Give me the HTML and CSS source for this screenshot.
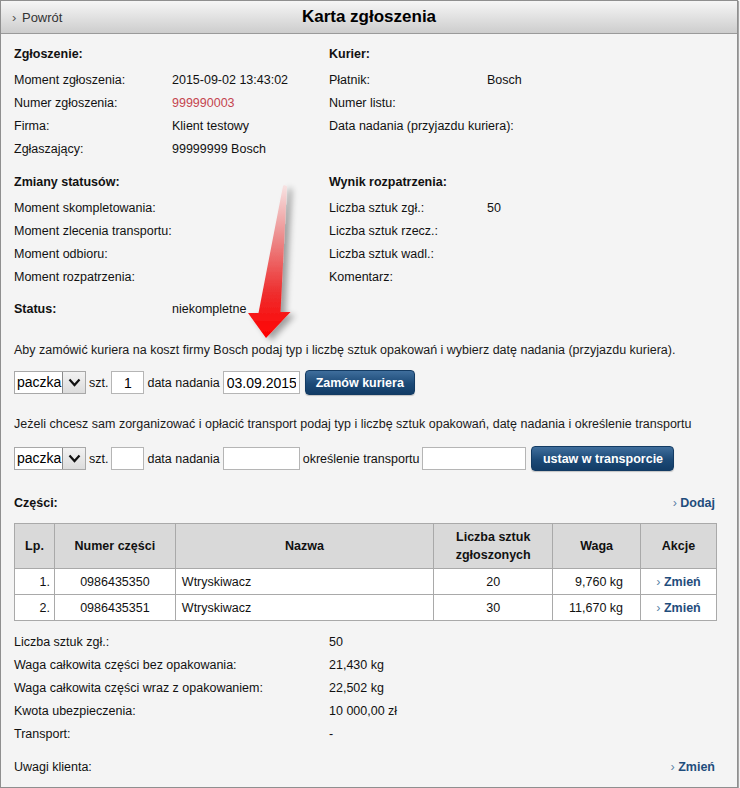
FILE: index.html
```html
<!DOCTYPE html>
<html lang="pl">
<head>
<meta charset="utf-8">
<title>Karta zgłoszenia</title>
<link rel="stylesheet" href="styles.css">
</head>
<body>
<div class="frame">
  <div class="header">
    <a class="back"><span class="chev">›</span> Powrót</a>
    <h1 class="title">Karta zgłoszenia</h1>
    <span></span>
  </div>

  <div class="content">
    <div class="info">
      <div class="block">
        <h3>Zgłoszenie:</h3>
        <div class="kv"><span>Moment zgłoszenia:</span><span>2015-09-02 13:43:02</span></div>
        <div class="kv"><span>Numer zgłoszenia:</span><span class="red">999990003</span></div>
        <div class="kv"><span>Firma:</span><span>Klient testowy</span></div>
        <div class="kv"><span>Zgłaszający:</span><span>99999999 Bosch</span></div>
      </div>
      <div class="block">
        <h3>Kurier:</h3>
        <div class="kv"><span>Płatnik:</span><span>Bosch</span></div>
        <div class="kv"><span>Numer listu:</span><span></span></div>
        <div class="kv wide"><span>Data nadania (przyjazdu kuriera):</span><span></span></div>
      </div>
      <div class="block second">
        <h3>Zmiany statusów:</h3>
        <div class="kv"><span>Moment skompletowania:</span><span></span></div>
        <div class="kv"><span>Moment zlecenia transportu:</span><span></span></div>
        <div class="kv"><span>Moment odbioru:</span><span></span></div>
        <div class="kv"><span>Moment rozpatrzenia:</span><span></span></div>
      </div>
      <div class="block second">
        <h3>Wynik rozpatrzenia:</h3>
        <div class="kv"><span>Liczba sztuk zgł.:</span><span>50</span></div>
        <div class="kv"><span>Liczba sztuk rzecz.:</span><span></span></div>
        <div class="kv"><span>Liczba sztuk wadl.:</span><span></span></div>
        <div class="kv"><span>Komentarz:</span><span></span></div>
      </div>
      <div class="kv status"><b>Status:</b><span>niekompletne</span></div>
    </div>

    <p class="note">Aby zamówić kuriera na koszt firmy Bosch podaj typ i liczbę sztuk opakowań i wybierz datę nadania (przyjazdu kuriera).</p>
    <div class="form-row">
      <div class="select"><span class="sel-text">paczka</span><span class="sel-btn"><svg width="13" height="9" viewBox="0 0 13 9"><path d="M1.5 1.5 L6.5 7 L11.5 1.5" fill="none" stroke="#111" stroke-width="2.2"/></svg></span></div>
      <span>szt.</span>
      <input class="in in-qty" value="1">
      <span>data nadania</span>
      <input class="in in-date" value="03.09.2015">
      <button class="btn btn-order">Zamów kuriera</button>
    </div>

    <p class="note">Jeżeli chcesz sam zorganizować i opłacić transport podaj typ i liczbę sztuk opakowań, datę nadania i określenie transportu</p>
    <div class="form-row">
      <div class="select"><span class="sel-text">paczka</span><span class="sel-btn"><svg width="13" height="9" viewBox="0 0 13 9"><path d="M1.5 1.5 L6.5 7 L11.5 1.5" fill="none" stroke="#111" stroke-width="2.2"/></svg></span></div>
      <span>szt.</span>
      <input class="in in-qty" value="">
      <span>data nadania</span>
      <input class="in in-date" value="">
      <span>określenie transportu</span>
      <input class="in in-transport" value="">
      <button class="btn btn-transport">ustaw w transporcie</button>
    </div>

    <div class="parts-head">
      <h3>Części:</h3>
      <a class="link"><span class="lchev">›</span> Dodaj</a>
    </div>

    <table class="parts">
      <thead>
        <tr>
          <th class="c-lp">Lp.</th>
          <th class="c-num">Numer części</th>
          <th class="c-name">Nazwa</th>
          <th class="c-qty">Liczba sztuk<br>zgłoszonych</th>
          <th class="c-w">Waga</th>
          <th class="c-act">Akcje</th>
        </tr>
      </thead>
      <tbody>
        <tr>
          <td class="r">1.</td>
          <td class="c">0986435350</td>
          <td>Wtryskiwacz</td>
          <td class="c">20</td>
          <td class="w">9,760 kg</td>
          <td class="c"><a class="link"><span class="lchev">›</span> Zmień</a></td>
        </tr>
        <tr>
          <td class="r">2.</td>
          <td class="c">0986435351</td>
          <td>Wtryskiwacz</td>
          <td class="c">30</td>
          <td class="w">11,670 kg</td>
          <td class="c"><a class="link"><span class="lchev">›</span> Zmień</a></td>
        </tr>
      </tbody>
    </table>

    <div class="summary">
      <div class="kv2"><span>Liczba sztuk zgł.:</span><span>50</span></div>
      <div class="kv2"><span>Waga całkowita części bez opakowania:</span><span>21,430 kg</span></div>
      <div class="kv2"><span>Waga całkowita części wraz z opakowaniem:</span><span>22,502 kg</span></div>
      <div class="kv2"><span>Kwota ubezpieczenia:</span><span>10 000,00 zł</span></div>
      <div class="kv2"><span>Transport:</span><span>-</span></div>
    </div>

    <div class="remarks">
      <span>Uwagi klienta:</span>
      <a class="link"><span class="lchev">›</span> Zmień</a>
    </div>
  </div>

  <svg class="arrow" width="70" height="170" viewBox="0 0 70 170">
    <defs>
      <linearGradient id="ag" x1="0" y1="0" x2="0" y2="1">
        <stop offset="0" stop-color="#f7e3e3"/>
        <stop offset="0.35" stop-color="#ec8a8a"/>
        <stop offset="0.7" stop-color="#ee2f2f"/>
        <stop offset="1" stop-color="#ff0000"/>
      </linearGradient>
      <filter id="sh" x="-50%" y="-20%" width="200%" height="140%">
        <feGaussianBlur in="SourceAlpha" stdDeviation="3"/>
        <feOffset dx="5" dy="3" result="b"/>
        <feComponentTransfer><feFuncA type="linear" slope="0.35"/></feComponentTransfer>
        <feMerge><feMergeNode/><feMergeNode in="SourceGraphic"/></feMerge>
      </filter>
    </defs>
    <path d="M43 4 L46 5 L39.5 131 L49.5 131 L25 157 L7 132 L17.5 132 L42 5 Z" fill="url(#ag)" filter="url(#sh)"/>
  </svg>
</div>
</body>
</html>
```

FILE: styles.css
```css
* { box-sizing: border-box; }

html, body {
  margin: 0;
  padding: 0;
  background: #ffffff;
}

body {
  font-family: "Liberation Sans", Arial, sans-serif;
  font-size: 12.5px;
  color: #111;
}

.frame {
  position: relative;
  width: 738px;
  height: 788px;
  border: 1px solid #8f8f8f;
  background: #f4f4f4;
  box-shadow: 1px 1px 1px rgba(0,0,0,0.35);
  overflow: hidden;
}

.header {
  height: 33px;
  display: grid;
  grid-template-columns: 1fr auto 1fr;
  align-items: center;
  background: linear-gradient(#f6f6f6, #cdcdcd);
  border-bottom: 1px solid #9a9a9a;
}

.back {
  padding-left: 11px;
  font-size: 13px;
  color: #333;
}

.chev {
  font-size: 13px;
  color: #555;
  margin-right: 2px;
}

.title {
  margin: 0;
  font-size: 17px;
  font-weight: bold;
  color: #000;
}

.content {
  padding: 9px 22px 0 13px;
}

.info {
  display: grid;
  grid-template-columns: 315px 1fr;
}

.block h3 {
  margin: 0 0 3px 0;
  font-size: 12.5px;
  font-weight: bold;
  line-height: 23px;
}

.block.second {
  margin-top: 10px;
}

.kv {
  display: grid;
  grid-template-columns: 158px 1fr;
  line-height: 23px;
  white-space: nowrap;
}

.kv.status {
  margin-top: 9px;
}

.red {
  color: #c4454f;
}

.note {
  margin: 18px 0 0 0;
  line-height: 23px;
  color: #1a1a1a;
  white-space: nowrap;
}

.form-row {
  display: flex;
  align-items: center;
  gap: 3px;
  height: 25px;
  margin-top: 8px;
}

.form-row + .note {
  margin-top: 18px;
}

.note:nth-of-type(2) + .form-row {
  margin-top: 10px;
}

.select {
  display: flex;
  width: 72px;
  height: 23px;
  border: 1px solid #a8a8a8;
  background: #fff;
}

.sel-text {
  flex: 1;
  font-size: 14px;
  line-height: 21px;
  padding-left: 2px;
  color: #000;
}

.sel-btn {
  width: 23px;
  display: flex;
  align-items: center;
  justify-content: center;
  border-left: 1px solid #8a8a8a;
  background: linear-gradient(#f2f2f2, #dcdcdc);
}

.in {
  height: 23px;
  border: 1px solid #b5b5b5;
  background: #fff;
  font-family: "Liberation Sans", Arial, sans-serif;
  font-size: 14px;
  padding: 0 3px;
  color: #000;
  margin: 0;
}

.in-qty { width: 33px; text-align: center; }
.in-date { width: 77px; }
.in-transport { width: 104px; }

.btn {
  height: 25px;
  border: 1px solid #133b63;
  border-radius: 4px;
  background: linear-gradient(#3f6e9c, #1c4a77 55%, #123c66);
  color: #fff;
  font-family: "Liberation Sans", Arial, sans-serif;
  font-size: 12.5px;
  font-weight: bold;
  padding: 0;
  margin-left: 2px;
  box-shadow: 0 1px 1px rgba(0,0,0,0.2);
}

.btn-order { width: 110px; }
.btn-transport { width: 143px; }

.parts-head {
  display: flex;
  justify-content: space-between;
  align-items: center;
  line-height: 23px;
  margin-top: 21px;
}

.parts-head h3 {
  margin: 0;
  font-size: 12.5px;
  font-weight: bold;
}

.link {
  color: #1f4d7c;
  font-weight: bold;
}

.lchev {
  color: #5a7fa6;
  font-weight: normal;
}

.parts {
  margin-top: 8px;
  width: 703px;
  border-collapse: collapse;
  background: #fff;
}

.parts th,
.parts td {
  border: 1px solid #a9a9a9;
  padding: 0 6px;
}

.parts th {
  background: #d9d9d9;
  font-weight: bold;
  height: 45px;
  line-height: 18px;
  text-align: center;
}

.parts td {
  height: 26px;
}

.c-lp { width: 40px; }
.c-num { width: 121px; }
.c-name { width: 259px; }
.c-qty { width: 119px; }
.c-w { width: 88px; }
.c-act { width: 76px; }

.parts td.r { text-align: right; padding-right: 4px; }
.parts td.c { text-align: center; }
.parts td.w { text-align: right; padding-right: 17px; }

.summary {
  margin-top: 10px;
}

.kv2 {
  display: grid;
  grid-template-columns: 315px 1fr;
  line-height: 23px;
}

.remarks {
  display: flex;
  justify-content: space-between;
  line-height: 23px;
  margin-top: 10px;
}

.arrow {
  position: absolute;
  left: 240px;
  top: 180px;
}
```
